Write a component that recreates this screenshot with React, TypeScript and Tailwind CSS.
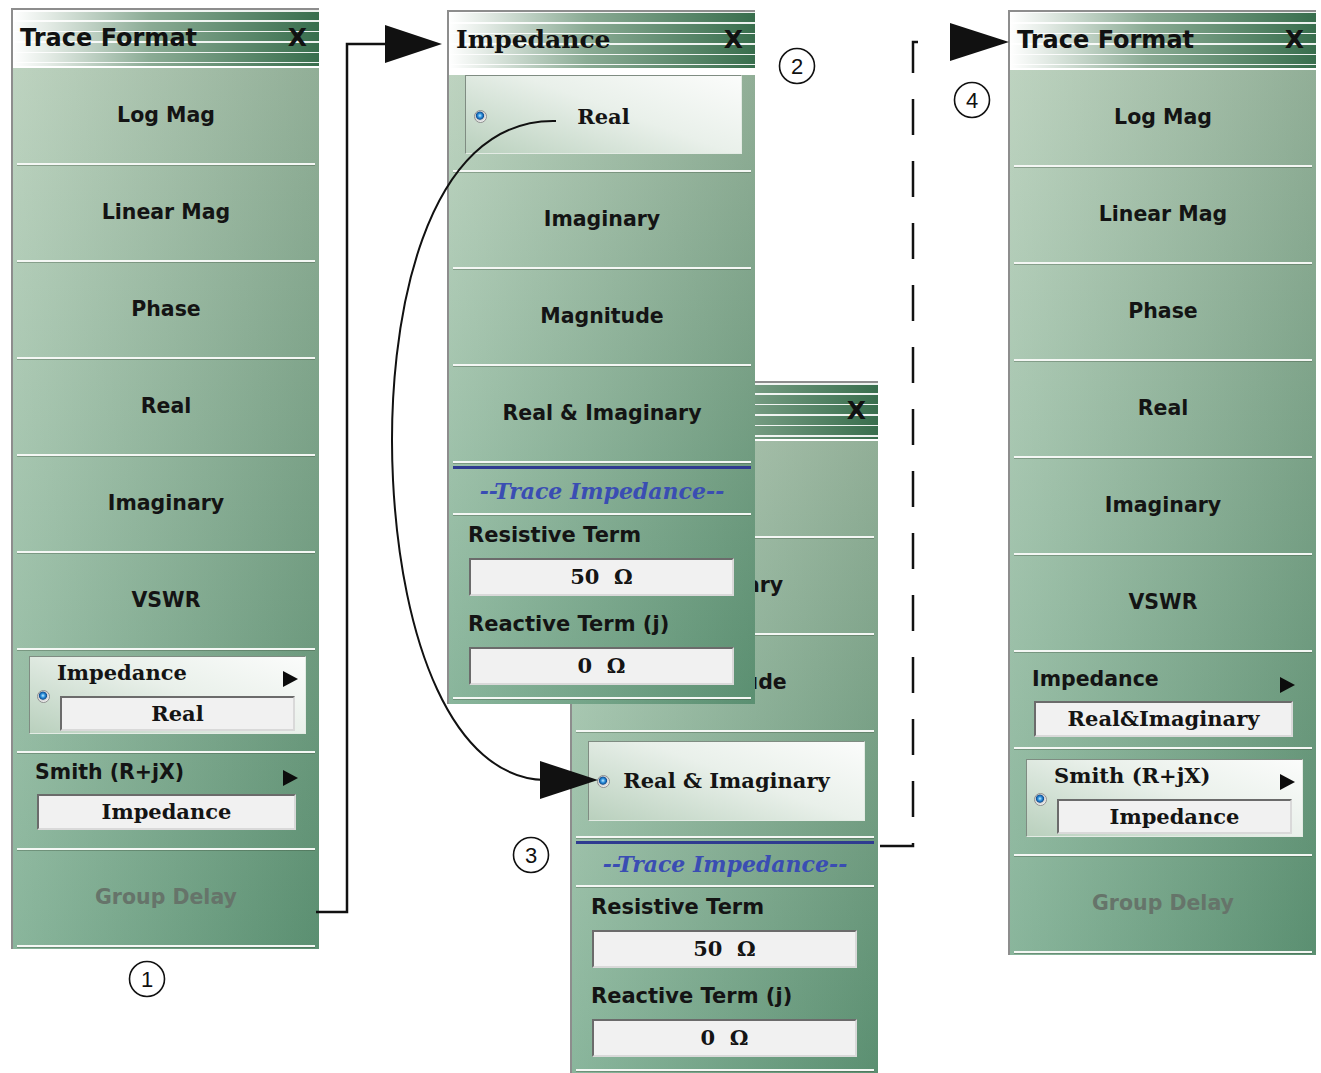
import React from "react"

// shared font stacks
const SANS = "font-['DejaVu_Sans',sans-serif]"
const SERIF = "font-['DejaVu_Serif',serif]"

function Sep() {
  return <div className="mx-[4px] h-[2px] bg-[#f4f7f4] shadow-[0_1px_0_rgba(60,80,60,0.35)]" />
}

function Row({ children, className = "" }: { children?: React.ReactNode; className?: string }) {
  return (
    <div>
      <div className={`h-[95px] ${className}`}>{children}</div>
      <Sep />
    </div>
  )
}

function Item({ label, disabled }: { label: string; disabled?: boolean }) {
  return (
    <Row className="flex items-center justify-center pb-[1px]">
      <span className={`${SANS} text-[20.5px] font-bold ${disabled ? "text-[#66746a]" : "text-[#141414]"}`}>{label}</span>
    </Row>
  )
}

function Radio() {
  return (
    <span className="inline-block w-[13px] h-[13px] shrink-0 rounded-full border border-[#8f8f8f] bg-[radial-gradient(circle_at_45%_42%,#c8ebff_0%,#3196e0_22%,#0f4f94_42%,#cfcfcf_50%,#ffffff_80%)]" />
  )
}

function Tri({ className = "" }: { className?: string }) {
  return (
    <svg width="15" height="16" viewBox="0 0 15 16" className={className}>
      <polygon points="0,0 15,8 0,16" fill="#0c0c0c" />
    </svg>
  )
}

function ValueBox({ children, className = "" }: { children: React.ReactNode; className?: string }) {
  return (
    <div
      className={`flex items-center justify-center bg-[#f1f1f1] border-2 border-t-[#6b6b6b] border-l-[#6b6b6b] border-b-[#d9d9d9] border-r-[#d9d9d9] ${SERIF} text-[21px] font-bold text-[#141414] whitespace-pre ${className}`}
    >
      {children}
    </div>
  )
}

const selectedBox =
  "border border-t-[#7f8c82] border-l-[#7f8c82] border-b-[#e3ebe4] border-r-[#e3ebe4] [background-image:linear-gradient(200deg,#fbfcfb_0%,#e9f0ea_45%,#b9d0bd_100%)]"

function SelectedItem({ label, box }: { label: string; box: string }) {
  return (
    <Row>
      <div className={`ml-[16px] mr-[13px] grid grid-cols-[30px_1fr_30px] items-center ${selectedBox} ${box}`}>
        <span className="pl-[8px] flex"><Radio /></span>
        <span className={`${SERIF} text-[21px] font-bold text-[#141414] text-center`}>{label}</span>
        <span />
      </div>
    </Row>
  )
}

function SubMenu({ label, value, selected, box = "mt-[7px]" }: { label: string; value: string; selected?: boolean; box?: string }) {
  if (selected) {
    return (
      <Row>
        <div className={`ml-[16px] mr-[13px] h-[78px] pt-[2px] flex flex-col ${selectedBox} ${box}`}>
          <div className="h-[28px] flex items-center justify-between pl-[27px] pr-[7px]">
            <span className={`${SERIF} text-[21px] font-bold text-[#141414]`}>{label}</span>
            <Tri className="mt-[12px]" />
          </div>
          <div className="mt-[9px] flex items-start">
            <span className="ml-[7px] -mt-[6px] flex"><Radio /></span>
            <ValueBox className="ml-[10px] mr-[10px] flex-1 h-[35px]">{value}</ValueBox>
          </div>
        </div>
      </Row>
    )
  }
  return (
    <Row className="flex flex-col">
      <div className={`h-[28px] flex items-center justify-between pl-[22px] pr-[21px] ${box}`}>
        <span className={`${SANS} text-[20.5px] font-bold text-[#141414]`}>{label}</span>
        <Tri className="mt-[12px]" />
      </div>
      <ValueBox className="mt-[8px] ml-[24px] mr-[23px] h-[36px]">{value}</ValueBox>
    </Row>
  )
}

function ImpedanceSection({ titleRow }: { titleRow: string }) {
  return (
    <div>
      <div className="mt-[3px] mx-[4px] h-[3px] bg-[#2f3b90]" />
      <div className={`flex items-center justify-center ${titleRow}`}>
        <span className={`${SERIF} italic font-bold text-[22px] text-[#3a4db3]`}>--Trace Impedance--</span>
      </div>
      <Sep />
      <div className={`mt-[8px] pl-[19px] leading-[24px] ${SANS} text-[21px] font-bold text-[#141414]`}>Resistive Term</div>
      <ValueBox className="mt-[11px] ml-[20px] mr-[21px] h-[38px]">50  Ω</ValueBox>
      <div className={`mt-[16px] pl-[19px] leading-[24px] ${SANS} text-[21px] font-bold text-[#141414]`}>Reactive Term (j)</div>
      <ValueBox className="mt-[11px] ml-[20px] mr-[21px] h-[38px]">0  Ω</ValueBox>
      <div className="mt-[12px]"><Sep /></div>
      <div className="h-[5px]" />
    </div>
  )
}

function Header({ title, serif }: { title: string; serif?: boolean }) {
  return (
    <div className="h-[58px] flex items-center justify-between pl-[7px] pr-[12px] border-b-2 border-white [background-image:repeating-linear-gradient(180deg,rgba(255,255,255,0.9)_0px,rgba(255,255,255,0.9)_1.5px,transparent_1.5px,transparent_10.4px),linear-gradient(90deg,#ffffff_0%,#e2eae4_12%,#8aab94_45%,#386e4d_100%)]">
      <span className={`${serif ? `${SERIF} text-[25px]` : `${SANS} text-[24px]`} font-bold text-[#111111]`}>{title}</span>
      <span className={`${SANS} text-[25px] font-bold text-[#111111]`}>X</span>
    </div>
  )
}

function Panel({ className, title, serif, children }: { className: string; title: string; serif?: boolean; children: React.ReactNode }) {
  return (
    <div className={`absolute w-[308px] border-t-2 border-l-2 border-[#8d8d8d] ${className}`}>
      <Header title={title} serif={serif} />
      <div className="[background-image:linear-gradient(90deg,rgba(255,255,255,0.2),rgba(0,40,20,0.16)),linear-gradient(180deg,#adc8b0,#6ca383)]">
        {children}
      </div>
    </div>
  )
}

function Callout({ x, y, n }: { x: number; y: number; n: string }) {
  return (
    <g>
      <circle cx={x} cy={y} r="17.5" fill="white" stroke="#111" strokeWidth="1.6" />
      <text x={x} y={y + 8} textAnchor="middle" fontFamily="'Liberation Sans', sans-serif" fontSize="22" fill="#111">{n}</text>
    </g>
  )
}

export default function App() {
  return (
    <div className="relative w-[1321px] h-[1073px] bg-white overflow-hidden">
      {/* 1: Trace Format, Impedance = Real */}
      <Panel className="left-[11px] top-[8px]" title="Trace Format">
        <Item label="Log Mag" />
        <Item label="Linear Mag" />
        <Item label="Phase" />
        <Item label="Real" />
        <Item label="Imaginary" />
        <Item label="VSWR" />
        <SubMenu label="Impedance" value="Real" selected box="mt-[6px]" />
        <SubMenu label="Smith (R+jX)" value="Impedance" box="mt-[5px]" />
        <Item label="Group Delay" disabled />
        <div className="h-[2px]" />
      </Panel>

      {/* 3: Impedance, Real & Imaginary picked (behind 2) */}
      <Panel className="left-[570px] top-[381px] h-[700px]" title="Impedance" serif>
        <Item label="Real" />
        <Item label="Imaginary" />
        <Item label="Magnitude" />
        <SelectedItem label="Real & Imaginary" box="mt-[9px] h-[80px]" />
        <ImpedanceSection titleRow="h-[41px]" />
      </Panel>

      {/* 2: Impedance, Real picked */}
      <Panel className="left-[447px] top-[10px]" title="Impedance" serif>
        <SelectedItem label="Real" box="mt-[5px] h-[79px] pt-[4px]" />
        <Item label="Imaginary" />
        <Item label="Magnitude" />
        <Item label="Real & Imaginary" />
        <ImpedanceSection titleRow="h-[44px]" />
      </Panel>

      {/* 4: Trace Format, Impedance = Real&Imaginary */}
      <Panel className="left-[1008px] top-[10px]" title="Trace Format">
        <Item label="Log Mag" />
        <Item label="Linear Mag" />
        <Item label="Phase" />
        <Item label="Real" />
        <Item label="Imaginary" />
        <Item label="VSWR" />
        <SubMenu label="Impedance" value="Real&Imaginary" box="mt-[13px]" />
        <SubMenu label="Smith (R+jX)" value="Impedance" selected box="mt-[10px]" />
        <Item label="Group Delay" disabled />
        <div className="h-[2px]" />
      </Panel>

      {/* connectors and callouts */}
      <svg className="absolute inset-0 pointer-events-none" width="1321" height="1073">
        <path d="M316 912 H347 V44 H390" fill="none" stroke="#111" strokeWidth="2.5" />
        <polygon points="385,25 442,44 385,63" fill="#111" />

        <path d="M556 121 C 425 118 385 320 393 480 C 401 640 452 778 545 780" fill="none" stroke="#111" strokeWidth="2" />
        <polygon points="540,761 598,780 540,799" fill="#111" />

        <path d="M880 846 H913 V42 H940" fill="none" stroke="#111" strokeWidth="2.5" strokeDasharray="36 26" />
        <polygon points="950,23 1009,42 950,61" fill="#111" />

        <Callout x={147} y={979} n="1" />
        <Callout x={797} y={66} n="2" />
        <Callout x={531} y={855} n="3" />
        <Callout x={972} y={100} n="4" />
      </svg>
    </div>
  )
}
